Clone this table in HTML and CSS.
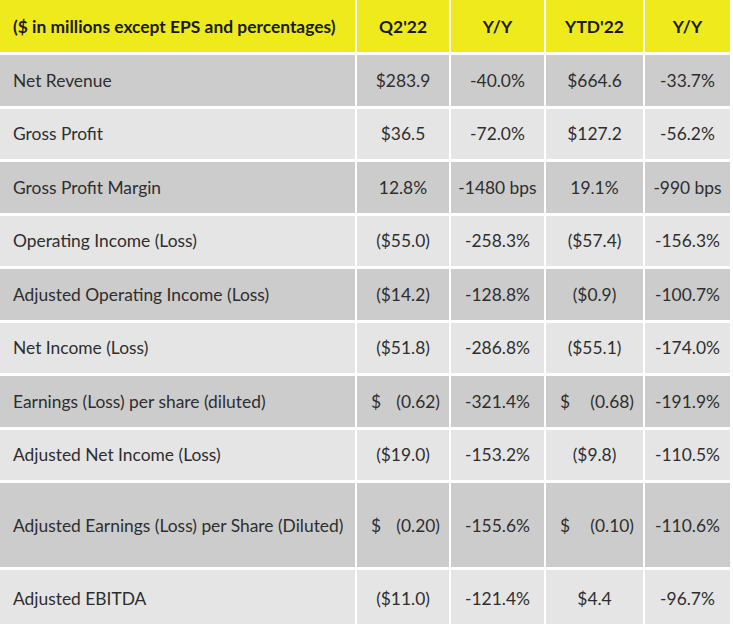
FILE: index.html
```html
<!DOCTYPE html>
<html>
<head>
<meta charset="utf-8">
<link rel="stylesheet" href="styles.css">
</head>
<body>
<div class="table">
  <div class="row head">
    <div class="cell label">($ in millions except EPS and percentages)</div>
    <div class="cell">Q2'22</div>
    <div class="cell">Y/Y</div>
    <div class="cell">YTD'22</div>
    <div class="cell">Y/Y</div>
  </div>
  <div class="row dark">
    <div class="cell label">Net Revenue</div>
    <div class="cell">$283.9</div>
    <div class="cell">-40.0%</div>
    <div class="cell">$664.6</div>
    <div class="cell">-33.7%</div>
  </div>
  <div class="row light">
    <div class="cell label">Gross Profit</div>
    <div class="cell">$36.5</div>
    <div class="cell">-72.0%</div>
    <div class="cell">$127.2</div>
    <div class="cell">-56.2%</div>
  </div>
  <div class="row dark">
    <div class="cell label">Gross Profit Margin</div>
    <div class="cell">12.8%</div>
    <div class="cell">-1480 bps</div>
    <div class="cell">19.1%</div>
    <div class="cell">-990 bps</div>
  </div>
  <div class="row light">
    <div class="cell label">Operating Income (Loss)</div>
    <div class="cell">($55.0)</div>
    <div class="cell">-258.3%</div>
    <div class="cell">($57.4)</div>
    <div class="cell">-156.3%</div>
  </div>
  <div class="row dark">
    <div class="cell label">Adjusted Operating Income (Loss)</div>
    <div class="cell">($14.2)</div>
    <div class="cell">-128.8%</div>
    <div class="cell">($0.9)</div>
    <div class="cell">-100.7%</div>
  </div>
  <div class="row light">
    <div class="cell label">Net Income (Loss)</div>
    <div class="cell">($51.8)</div>
    <div class="cell">-286.8%</div>
    <div class="cell">($55.1)</div>
    <div class="cell">-174.0%</div>
  </div>
  <div class="row dark">
    <div class="cell label">Earnings (Loss) per share (diluted)</div>
    <div class="cell acct"><span>$</span><span>(0.62)</span></div>
    <div class="cell">-321.4%</div>
    <div class="cell acct"><span>$</span><span>(0.68)</span></div>
    <div class="cell">-191.9%</div>
  </div>
  <div class="row light">
    <div class="cell label">Adjusted Net Income (Loss)</div>
    <div class="cell">($19.0)</div>
    <div class="cell">-153.2%</div>
    <div class="cell">($9.8)</div>
    <div class="cell">-110.5%</div>
  </div>
  <div class="row dark tall">
    <div class="cell label">Adjusted Earnings (Loss) per Share (Diluted)</div>
    <div class="cell acct"><span>$</span><span>(0.20)</span></div>
    <div class="cell">-155.6%</div>
    <div class="cell acct"><span>$</span><span>(0.10)</span></div>
    <div class="cell">-110.6%</div>
  </div>
  <div class="row light last">
    <div class="cell label">Adjusted EBITDA</div>
    <div class="cell">($11.0)</div>
    <div class="cell">-121.4%</div>
    <div class="cell">$4.4</div>
    <div class="cell">-96.7%</div>
  </div>
</div>
</body>
</html>
```
FILE: styles.css
```css
html, body {
  margin: 0;
  padding: 0;
  background: #ffffff;
}
body {
  width: 733px;
  height: 624px;
  overflow: hidden;
  font-family: Lato, "Open Sans", sans-serif;
  font-size: 17.4px;
  color: #2e2e2e;
}
.table {
  display: flex;
  flex-direction: column;
  gap: 3px;
  width: 730px;
}
.row {
  display: grid;
  grid-template-columns: 355px 92px 93px 97px 85px;
  column-gap: 2px;
  height: 50.5px;
}
.row.head {
  height: 52px;
  font-weight: bold;
  color: #1a1a1a;
}
.row.tall {
  height: 84px;
}
.row.last {
  height: 56px;
}
.cell {
  display: flex;
  align-items: center;
  justify-content: center;
  white-space: nowrap;
}
.cell.label {
  justify-content: flex-start;
  padding-left: 13px;
}
.cell.acct {
  justify-content: space-between;
  padding: 0 9px 0 14px;
}
.head .cell {
  background: #eeea1c;
}
.dark .cell {
  background: #cccccc;
}
.light .cell {
  background: #e5e5e5;
}
```
